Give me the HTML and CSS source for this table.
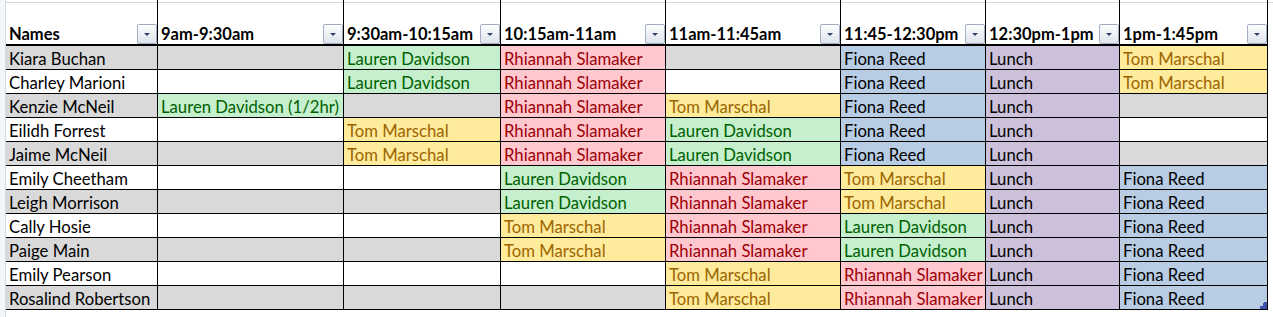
FILE: index.html
```html
<!DOCTYPE html>
<html>
<head>
<meta charset="utf-8">
<link rel="stylesheet" href="styles.css">
</head>
<body>
<div class="sheet">
  <div class="grid">
    <div class="hd"><span>Names</span><i class="dd"></i></div>
    <div class="hd"><span>9am-9:30am</span><i class="dd"></i></div>
    <div class="hd"><span>9:30am-10:15am</span><i class="dd"></i></div>
    <div class="hd"><span>10:15am-11am</span><i class="dd"></i></div>
    <div class="hd"><span>11am-11:45am</span><i class="dd"></i></div>
    <div class="hd"><span>11:45-12:30pm</span><i class="dd"></i></div>
    <div class="hd"><span>12:30pm-1pm</span><i class="dd"></i></div>
    <div class="hd"><span>1pm-1:45pm</span><i class="dd"></i></div>

    <div class="c g">Kiara Buchan</div><div class="c g"></div><div class="c ld">Lauren Davidson</div><div class="c rs">Rhiannah Slamaker</div><div class="c g"></div><div class="c fr">Fiona Reed</div><div class="c lu">Lunch</div><div class="c tm">Tom Marschal</div>

    <div class="c">Charley Marioni</div><div class="c"></div><div class="c ld">Lauren Davidson</div><div class="c rs">Rhiannah Slamaker</div><div class="c"></div><div class="c fr">Fiona Reed</div><div class="c lu">Lunch</div><div class="c tm">Tom Marschal</div>

    <div class="c g">Kenzie McNeil</div><div class="c ld">Lauren Davidson (1/2hr)</div><div class="c g"></div><div class="c rs">Rhiannah Slamaker</div><div class="c tm">Tom Marschal</div><div class="c fr">Fiona Reed</div><div class="c lu">Lunch</div><div class="c g"></div>

    <div class="c">Eilidh Forrest</div><div class="c"></div><div class="c tm">Tom Marschal</div><div class="c rs">Rhiannah Slamaker</div><div class="c ld">Lauren Davidson</div><div class="c fr">Fiona Reed</div><div class="c lu">Lunch</div><div class="c"></div>

    <div class="c g">Jaime McNeil</div><div class="c g"></div><div class="c tm">Tom Marschal</div><div class="c rs">Rhiannah Slamaker</div><div class="c ld">Lauren Davidson</div><div class="c fr">Fiona Reed</div><div class="c lu">Lunch</div><div class="c g"></div>

    <div class="c">Emily Cheetham</div><div class="c"></div><div class="c"></div><div class="c ld">Lauren Davidson</div><div class="c rs">Rhiannah Slamaker</div><div class="c tm">Tom Marschal</div><div class="c lu">Lunch</div><div class="c fr">Fiona Reed</div>

    <div class="c g">Leigh Morrison</div><div class="c g"></div><div class="c g"></div><div class="c ld">Lauren Davidson</div><div class="c rs">Rhiannah Slamaker</div><div class="c tm">Tom Marschal</div><div class="c lu">Lunch</div><div class="c fr">Fiona Reed</div>

    <div class="c">Cally Hosie</div><div class="c"></div><div class="c"></div><div class="c tm">Tom Marschal</div><div class="c rs">Rhiannah Slamaker</div><div class="c ld">Lauren Davidson</div><div class="c lu">Lunch</div><div class="c fr">Fiona Reed</div>

    <div class="c g">Paige Main</div><div class="c g"></div><div class="c g"></div><div class="c tm">Tom Marschal</div><div class="c rs">Rhiannah Slamaker</div><div class="c ld">Lauren Davidson</div><div class="c lu">Lunch</div><div class="c fr">Fiona Reed</div>

    <div class="c">Emily Pearson</div><div class="c"></div><div class="c"></div><div class="c"></div><div class="c tm">Tom Marschal</div><div class="c rs">Rhiannah Slamaker</div><div class="c lu">Lunch</div><div class="c fr">Fiona Reed</div>

    <div class="c g">Rosalind Robertson</div><div class="c g"></div><div class="c g"></div><div class="c g"></div><div class="c tm">Tom Marschal</div><div class="c rs">Rhiannah Slamaker</div><div class="c lu">Lunch</div><div class="c fr last">Fiona Reed<svg class="handle" width="7" height="7" viewBox="0 0 7 7"><polygon points="7,0 7,7 0,7 0,4 3,4 3,1 4,1 4,0" fill="#3b50a8"/></svg></div>
  </div>
</div>
</body>
</html>
```

FILE: styles.css
```css
* { box-sizing: border-box; }
html, body { margin: 0; padding: 0; }
body {
  background: #f3f6fb;
  width: 1273px;
  height: 317px;
  overflow: hidden;
  font-family: Lato, "Liberation Sans", sans-serif;
}
.sheet {
  margin-left: 5px;
  height: 317px;
  background: #fff;
  border-left: 1px solid #d0d7e5;
  background-image: linear-gradient(to bottom, transparent 2px, #d0d7e5 2px, #d0d7e5 3px, transparent 3px);
}
.grid {
  display: grid;
  grid-template-columns: 152px 186px 157px 165px 175px 145px 134px 148px;
  grid-auto-rows: 24px;
  grid-template-rows: 46px;
  width: 1262px;
}
.hd {
  display: flex;
  align-items: flex-end;
  justify-content: space-between;
  border-right: 1px solid #000;
  border-bottom: 2px solid #000;
  font-weight: 700;
  font-size: 16.5px;
  line-height: 20px;
  padding-left: 3px;
  color: #000;
  background-image: linear-gradient(to bottom, transparent 2px, #d0d7e5 2px, #d0d7e5 3px, transparent 3px);
}
.hd span { white-space: nowrap; }
.dd {
  flex: none;
  width: 20px;
  height: 20px;
  border: 1px solid #a3aec2;
  border-radius: 2px;
  background: linear-gradient(to bottom, #fdfdfe, #dfe4ec);
  display: flex;
  align-items: center;
  justify-content: center;
}
.dd::after {
  content: "";
  width: 0;
  height: 0;
  border-left: 3px solid transparent;
  border-right: 3px solid transparent;
  border-top: 3px solid #2e4170;
}
.c {
  display: flex;
  align-items: flex-end;
  border-right: 1px solid #000;
  border-bottom: 1px solid #000;
  padding-left: 3px;
  font-size: 16.7px;
  line-height: 20px;
  white-space: nowrap;
  overflow: hidden;
  color: #000;
  background: #fff;
}
.g { background: #d9d9d9; }
.ld { background: #c6efce; color: #006100; }
.rs { background: #ffc7ce; color: #9c0006; }
.tm { background: #ffeb9c; color: #9c6500; }
.fr { background: #b8cce4; }
.lu { background: #ccc0da; }
.last { position: relative; }
.handle { position: absolute; right: 0; bottom: 0; }
```
